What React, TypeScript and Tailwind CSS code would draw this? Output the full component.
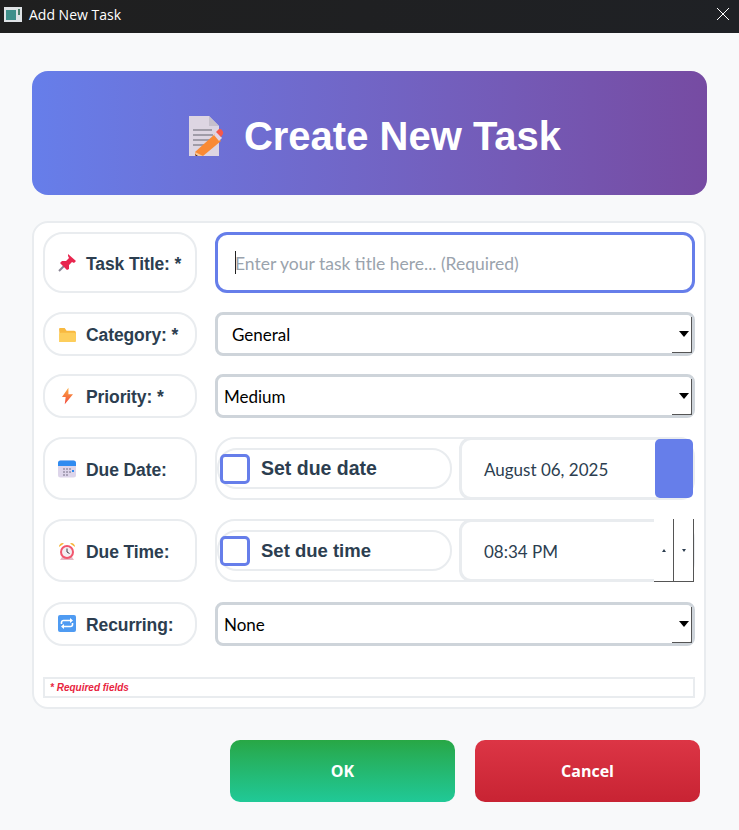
import React from "react";

const labelFont = "font-['Liberation_Sans',Arial,sans-serif]";
const uiFont = "font-['Open_Sans','Noto_Sans',sans-serif]";
const fieldFont = "font-['Lato','Open_Sans',sans-serif]";

function NoteIcon() {
  return (
    <svg width="36" height="40" viewBox="0 0 36 40">
      <path d="M1 0h20l10 10v30H1z" fill="#ddd5e2" />
      <path d="M21 0l10 10H21z" fill="#c6c0cc" />
      <path d="M5 14h19M5 19h20M5 24h20M5 29h11" stroke="#a09ca8" strokeWidth="2" />
      <path d="M7 36L27 18l6 7-18 15H7z" fill="#f98a35" />
      <path d="M26 19l3-3 5 6-3 3z" fill="#e3d6e6" />
      <path d="M28 16l3-3c2-1 5 3 4 5l-2 3z" fill="#f6584a" />
      <path d="M7 36l1 4h7z" fill="#f6c99b" />
      <path d="M7 38l1 2h2z" fill="#3a2a3a" />
    </svg>
  );
}

function PinIcon() {
  return (
    <svg width="19" height="18" viewBox="0 0 18 18">
      <path d="M1 17l6-6" stroke="#8a8494" strokeWidth="2" />
      <path d="M10 0l8 7-2 2-2-1-3 3 0 4-2 1-7-7 2-2 4 0 3-3-1-2z" fill="#e8264f" />
    </svg>
  );
}

function FolderIcon() {
  return (
    <svg width="17" height="15" viewBox="0 0 18 16">
      <path d="M0 2a1 1 0 011-1h5l2 3h8a2 2 0 012 2v8a2 2 0 01-2 2H1z" fill="#f8b940" />
      <path d="M2 6h14a2 2 0 012 2v6a2 2 0 01-2 2H0V8a2 2 0 012-2z" fill="#fdce5c" />
    </svg>
  );
}

function BoltIcon() {
  return (
    <svg width="11" height="18" viewBox="0 0 12 18">
      <defs>
        <linearGradient id="bolt" x1="0" y1="0" x2="0" y2="1">
          <stop offset="0" stopColor="#fbab3e" />
          <stop offset="1" stopColor="#f1483f" />
        </linearGradient>
      </defs>
      <path d="M7 0L0 10h4l-1 8 9-11H7z" fill="url(#bolt)" />
    </svg>
  );
}

function CalendarIcon() {
  return (
    <svg width="18" height="18" viewBox="0 0 18 18">
      <rect y="0.5" width="18" height="17" rx="2.5" fill="#ddd5ea" />
      <path d="M0 6V3a2.5 2.5 0 012.5-2.5h13A2.5 2.5 0 0118 3v3z" fill="#2f8bf0" />
      <path d="M5 8h2v2H5zM8 8h2v2H8zM11 8h2v2h-2zM5 11h2v2H5zM8 11h2v2H8zM11 11h2v2h-2zM5 14h2v2H5zM8 14h2v2H8z" fill="#a9a2b8" />
      <path d="M14 10h2v2h-2z" fill="#2f8bf0" />
    </svg>
  );
}

function ClockIcon() {
  return (
    <svg width="18" height="18" viewBox="0 0 18 18">
      <path d="M1 5a3.5 3.5 0 015-3.5zM17 5a3.5 3.5 0 00-5-3.5z" fill="#f6b73c" />
      <path d="M2 18h14l-2-3H4z" fill="#e6b8c4" />
      <circle cx="9" cy="10" r="7" fill="#f2566e" />
      <circle cx="9" cy="10" r="5" fill="#f4eef2" />
      <path d="M9 6.5V10l2.5 1.5" stroke="#3d3a46" strokeWidth="1" fill="none" />
    </svg>
  );
}

function RepeatIcon() {
  return (
    <svg width="18" height="18" viewBox="0 0 18 18">
      <rect width="18" height="17" rx="2" fill="#4f9bf2" />
      <path d="M3.5 9V7.5A2 2 0 015.5 5.5h8M14.5 8v1.5a2 2 0 01-2 2h-8" stroke="#fff" strokeWidth="1.6" fill="none" />
      <path d="M12 3l3 2.5L12 8zM6 9l-3 2.5L6 14z" fill="#fff" />
    </svg>
  );
}

function FieldLabel({ icon, text, className, textPad = "pt-[2px]" }: { icon: React.ReactNode; text: string; className: string; textPad?: string }) {
  return (
    <div className={`flex w-[154px] shrink-0 items-center rounded-[20px] border-[2px] border-[#e9ecef] bg-white pl-[13px] ${className}`}>
      <span className="flex w-[18px] shrink-0 justify-center">{icon}</span>
      <span className={`ml-[10px] text-[17.5px] font-bold tracking-[-0.1px] text-[#2c3e50] ${textPad} ${labelFont}`}>{text}</span>
    </div>
  );
}

function SelectBox({ value, pad }: { value: string; pad: string }) {
  return (
    <div className="relative h-[44px] w-[480px] rounded-[8px] border-[3px] border-[#ced4da] bg-white">
      <select defaultValue={value} className={`h-full w-full appearance-none bg-transparent pt-[1px] text-[17px] text-black outline-none ${pad} ${fieldFont}`}>
        <option>{value}</option>
      </select>
      {/* native combo arrow and its raised corner */}
      <span className="absolute right-[3px] top-[16px] h-0 w-0 border-x-[5px] border-t-[6px] border-x-transparent border-t-black" />
      <span className="absolute bottom-[0px] right-0 h-[36px] w-[20px] border-b border-r border-[#555]" />
    </div>
  );
}

function ToggleRow({ label, value, textSize, spin }: { label: string; value: string; textSize: string; spin?: boolean }) {
  return (
    <div className="flex h-[63px] w-[480px] items-stretch rounded-[20px] border-[2px] border-[#e9ecef] bg-white">
      <div className="my-[9px] ml-0 flex w-[235px] items-center rounded-[20px] border-[2px] border-[#e9ecef] pl-[1px]">
        <span className="size-[30px] rounded-[5px] border-[3px] border-[#667eea] bg-white" />
        <span className={`ml-[11px] font-bold text-[#2c3e50] ${textSize} ${labelFont}`}>{label}</span>
      </div>
      <div className="relative ml-[7px] mt-[-2px] mb-[-2px] flex flex-1 items-center rounded-[12px] border-[3px] border-[#e9ecef] bg-white pl-[22px]">
        <span className={`pt-[3px] text-[17px] text-[#2c3e50] ${fieldFont}`}>{value}</span>
        {spin ? (
          <div className="absolute -right-[4px] -top-[3px] -bottom-[3px] flex">
            <span className="flex w-[20px] items-center justify-center border-b border-r border-[#555] bg-white">
              <span className="h-0 w-0 border-x-[2.5px] border-b-[3px] border-x-transparent border-b-[#2c3e50]" />
            </span>
            <span className="flex w-[20px] items-center justify-center border-b border-r border-[#555] bg-white">
              <span className="h-0 w-0 border-x-[2.5px] border-t-[3px] border-x-transparent border-t-[#2c3e50]" />
            </span>
          </div>
        ) : (
          <span className="absolute -right-[3px] -top-[1px] -bottom-[1px] w-[38px] rounded-[5px] bg-[#667eea]" />
        )}
      </div>
    </div>
  );
}

export default function App() {
  return (
    <div className="flex h-[830px] w-[739px] flex-col overflow-hidden bg-[#f8f9fa]">
      {/* Title bar */}
      <div className={`flex h-[33px] shrink-0 items-center bg-gradient-to-r from-[#1f1f1f] to-[#1f2125] pb-[5px] pl-[4px] text-white ${uiFont}`}>
        <svg width="18" height="15" viewBox="0 0 18 15">
          <rect width="18" height="15" fill="#dfe3e6" />
          <rect x="2" y="3" width="10" height="10" fill="#3f8f8a" />
          <rect x="14" y="2" width="2" height="6" fill="#4a7f6a" />
        </svg>
        <span className="ml-[7px] text-[14px]">Add New Task</span>
        <svg className="ml-auto mr-[10px]" width="12" height="12" viewBox="0 0 12 12">
          <path d="M0 0l12 12M12 0L0 12" stroke="#fff" strokeWidth="1" />
        </svg>
      </div>

      <div className="flex flex-col pl-[32px] pt-[38px]">
        {/* Header */}
        <div className="flex h-[124px] w-[675px] items-center justify-center rounded-[16px] bg-gradient-to-r from-[#667eea] to-[#764ba2] pl-[10px] pt-[6px]">
          <NoteIcon />
          <span className={`ml-[20px] text-[40px] font-bold text-white ${labelFont}`}>Create New Task</span>
        </div>

        {/* Form card */}
        <div className="mt-[26px] flex h-[488px] w-[674px] flex-col rounded-[16px] border-[2px] border-[#e9ecef] bg-white pl-[9px] pt-[9px]">
          <div className="flex gap-[18px]">
            <FieldLabel icon={<PinIcon />} text="Task Title: *" className="h-[61px]" textPad="pt-[3px]" />
            <div className="flex h-[61px] w-[480px] items-center rounded-[12px] border-[3px] border-[#667eea] bg-white pl-[17px]">
              <span className="mr-[-1px] h-[23px] w-px bg-[#222]" />
              <input readOnly placeholder="Enter your task title here... (Required)" className={`w-full bg-transparent pt-[3px] text-[17.5px] outline-none placeholder:text-[#9aa3ad] ${fieldFont}`} />
            </div>
          </div>
          <div className="mt-[19px] flex gap-[18px]">
            <FieldLabel icon={<FolderIcon />} text="Category: *" className="h-[44px]" />
            <SelectBox value="General" pad="pl-[14px]" />
          </div>
          <div className="mt-[18px] flex gap-[18px]">
            <FieldLabel icon={<BoltIcon />} text="Priority: *" className="h-[44px]" />
            <SelectBox value="Medium" pad="pl-[6px]" />
          </div>
          <div className="mt-[19px] flex gap-[18px]">
            <FieldLabel icon={<CalendarIcon />} text="Due Date:" className="h-[63px]" textPad="pt-[3px]" />
            <ToggleRow label="Set due date" value="August 06, 2025" textSize="text-[19.5px]" />
          </div>
          <div className="mt-[19px] flex gap-[18px]">
            <FieldLabel icon={<ClockIcon />} text="Due Time:" className="h-[63px]" textPad="pt-[3px]" />
            <ToggleRow label="Set due time" value="08:34 PM" textSize="text-[18.5px]" spin />
          </div>
          <div className="mt-[20px] flex gap-[18px]">
            <FieldLabel icon={<RepeatIcon />} text="Recurring:" className="h-[44px]" />
            <SelectBox value="None" pad="pl-[6px]" />
          </div>
          <div className={`mt-[31px] flex h-[21px] w-[652px] items-center border-[2px] border-[#e9ecef] pl-[5px] text-[10px] font-bold italic text-[#e8253f] ${labelFont}`}>
            * Required fields
          </div>
        </div>

        {/* Buttons */}
        <div className={`mt-[31px] flex gap-[20px] pl-[198px] ${uiFont}`}>
          <button className="h-[62px] w-[225px] rounded-[10px] bg-gradient-to-b from-[#28a745] to-[#20c997] text-[16px] font-bold text-white">OK</button>
          <button className="h-[62px] w-[225px] rounded-[10px] bg-gradient-to-b from-[#dc3545] to-[#c82333] text-[16px] font-bold text-white">Cancel</button>
        </div>
      </div>
    </div>
  );
}
